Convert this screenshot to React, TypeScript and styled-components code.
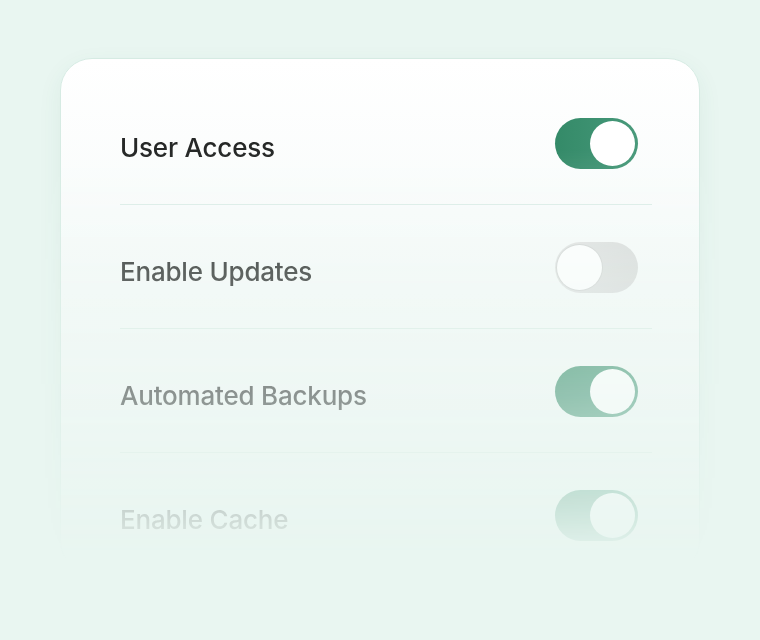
import React from "react";
import styled, { createGlobalStyle } from "styled-components";

const Global = createGlobalStyle`
  html, body { margin: 0; padding: 0; }
  body {
    background: #e9f6f1;
    font-family: Inter, "Noto Sans", sans-serif;
    -webkit-font-smoothing: antialiased;
  }
`;

const Page = styled.div`
  width: 760px;
  height: 640px;
  box-sizing: border-box;
  padding: 38px 40px 0 40px;
  display: flex;
  justify-content: center;
  align-items: flex-start;
`;

const Fade = styled.div`
  padding: 20px 20px 0 20px;
  -webkit-mask-image: linear-gradient(
    to bottom,
    #000 0px,
    #000 112px,
    rgba(0, 0, 0, 0.72) 234px,
    rgba(0, 0, 0, 0.48) 357px,
    rgba(0, 0, 0, 0.14) 479px,
    transparent 524px
  );
  mask-image: linear-gradient(
    to bottom,
    #000 0px,
    #000 112px,
    rgba(0, 0, 0, 0.72) 234px,
    rgba(0, 0, 0, 0.48) 357px,
    rgba(0, 0, 0, 0.14) 479px,
    transparent 524px
  );
`;

const Card = styled.div`
  width: 640px;
  height: 515px;
  box-sizing: border-box;
  padding: 22px 47px 0 59px;
  border: 1px solid #d6ebe3;
  border-radius: 32px;
  background: linear-gradient(to bottom, #ffffff 0%, #f6faf9 45%, #f1f8f5 100%);
  box-shadow: 0 8px 24px rgba(40, 110, 85, 0.07);
  overflow: hidden;
`;

const Row = styled.div<{ $last?: boolean }>`
  display: flex;
  align-items: center;
  justify-content: space-between;
  padding: 37px 14px 27px 0;
  border-bottom: ${(p) => (p.$last ? "none" : "1px solid #dcede7")};
`;

const Label = styled.span`
  font-size: 26px;
  font-weight: 500;
  color: #262827;
  letter-spacing: -0.2px;
`;

const Track = styled.button<{ $on: boolean }>`
  position: relative;
  width: 83px;
  height: 51px;
  margin-bottom: 8px;
  border: none;
  padding: 0;
  border-radius: 26px;
  cursor: pointer;
  background: ${(p) =>
    p.$on
      ? "linear-gradient(90deg, #348a68 0%, #3f9373 60%, #4a9a7b 100%)"
      : "linear-gradient(90deg, #e2e4e3 0%, #dadcdb 100%)"};
`;

const Knob = styled.span<{ $on: boolean }>`
  position: absolute;
  top: 3px;
  left: ${(p) => (p.$on ? "35px" : "2px")};
  width: 45px;
  height: 45px;
  border-radius: 50%;
  background: #ffffff;
  box-shadow: ${(p) => (p.$on ? "none" : "0 0 0 1px #d3d5d4")};
`;

const Toggle = ({ on }: { on: boolean }) => (
  <Track $on={on} aria-pressed={on}>
    <Knob $on={on} />
  </Track>
);

const items = [
  { label: "User Access", on: true },
  { label: "Enable Updates", on: false },
  { label: "Automated Backups", on: true },
  { label: "Enable Cache", on: true },
];

export default function App() {
  return (
    <>
      <Global />
      <Page>
        <Fade>
          <Card>
            {items.map((it, i) => (
              <Row key={it.label} $last={i === items.length - 1}>
                <Label>{it.label}</Label>
                <Toggle on={it.on} />
              </Row>
            ))}
          </Card>
        </Fade>
      </Page>
    </>
  );
}
